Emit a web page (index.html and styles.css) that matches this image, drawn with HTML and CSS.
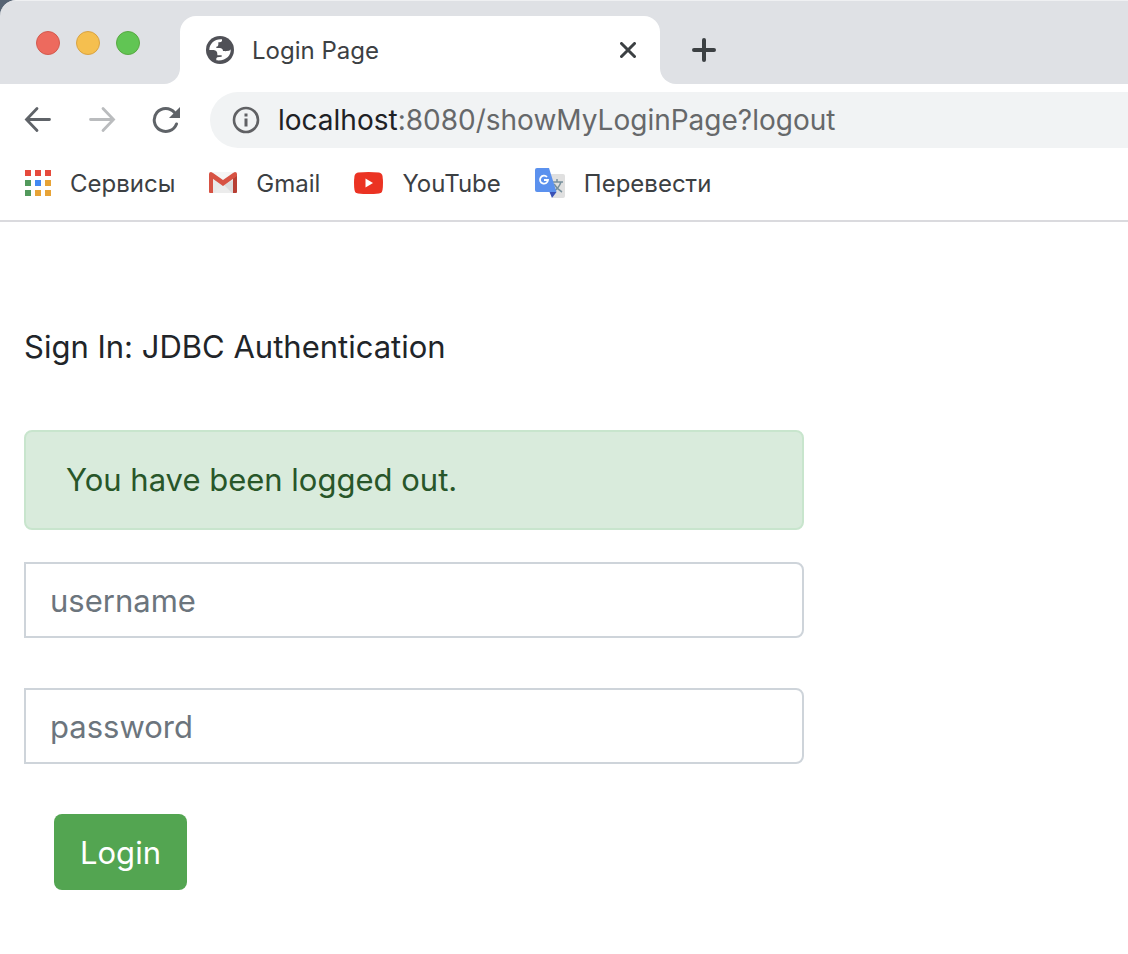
FILE: index.html
```html
<!DOCTYPE html>
<html lang="ru">
<head>
<meta charset="utf-8">
<title>Login Page</title>
<link rel="stylesheet" href="styles.css">
</head>
<body>
<header class="browser">
  <div class="tabstrip">
    <div class="strip-start">
      <button class="light light-close" aria-label="Close window"></button>
      <button class="light light-min" aria-label="Minimize window"></button>
      <button class="light light-max" aria-label="Zoom window"></button>
    </div>
    <div class="tab-slot">
      <div class="tab">
        <svg class="globe" viewBox="0 0 84 84" aria-hidden="true">
          <circle cx="42" cy="42" r="42" fill="#505157"/>
          <path fill="#fff" d="M10 42C10 24 25 10 44 10L48 10L48 15Q46 19 40 19L37 19L37 26Q37 32 31 32L31 36L41 36Q51 37 51 45L58 45Q58 51 52 54L49 58L34 58L34 54Q34 44 23 42Z"/>
          <path fill="#fff" d="M74 39C76 58 60 76 31 73L31 67Q32 63 40 63L47 62L47 54L55 47Q60 44 62 45L69 44Q74 43 74 39Z"/>
        </svg>
        <span class="tab-title">Login Page</span>
        <button class="icon-button" aria-label="Close tab">
          <svg width="16" height="16" viewBox="0 0 16 16"><path d="M1.500 1.500L14.500 14.500M14.500 1.500L1.500 14.500" stroke="#3c4043" stroke-width="3" stroke-linecap="round"/></svg>
        </button>
      </div>
    </div>
    <div class="strip-end">
      <button class="icon-button" aria-label="New tab">
        <svg width="24" height="24" viewBox="0 0 24 24"><path d="M12 2V22M2 12H22" stroke="#3c4043" stroke-width="4" stroke-linecap="round"/></svg>
      </button>
    </div>
  </div>
  <div class="toolbar">
    <nav class="nav-buttons" aria-label="Navigation">
      <button class="icon-button" aria-label="Back">
        <svg width="28" height="28" viewBox="0 0 28 28" fill="none"><path d="M25.500 13.500H3M13 2.500L2.500 13.500L13 24.500" stroke="#5f6368" stroke-width="2.800" stroke-linecap="round"/></svg>
      </button>
      <button class="icon-button" aria-label="Forward" disabled>
        <svg width="28" height="28" viewBox="0 0 28 28" fill="none"><path d="M2.500 13.500H25M15 2.500L25.500 13.500L15 24.500" stroke="#babcbe" stroke-width="2.800" stroke-linecap="round"/></svg>
      </button>
      <button class="icon-button" aria-label="Reload">
        <svg width="28" height="28" viewBox="0 0 28 28" fill="none"><path d="M22.500 6.500A11.500 11.500 0 1 0 24.500 18" stroke="#5f6368" stroke-width="3" stroke-linecap="round"/><path d="M28 1V12H17Z" fill="#5f6368"/></svg>
      </button>
    </nav>
    <div class="omnibox">
      <svg width="28" height="28" viewBox="0 0 28 28" aria-hidden="true"><circle cx="14" cy="14" r="12" fill="none" stroke="#606164" stroke-width="2.600"/><path d="M12.500 7.500h3v3h-3zM12.500 12.500h3v8h-3z" fill="#606164"/></svg>
      <span class="url"><span class="url-host">localhost</span>:8080/showMyLoginPage?logout</span>
    </div>
  </div>
  <nav class="bookmarks" aria-label="Bookmarks">
    <a class="bookmark" href="#">
      <svg width="26" height="26" viewBox="0 0 26 26" aria-hidden="true">
        <path fill="#e64a3c" d="M0 0h6v6H0zM10 0h6v6h-6zM20 0h6v6h-6z"/>
        <path fill="#52995c" d="M0 10h6v6H0zM0 20h6v6H0z"/>
        <path fill="#4289f3" d="M10 10h6v6h-6z"/>
        <path fill="#e7a336" d="M20 10h6v6h-6zM10 20h6v6h-6zM20 20h6v6h-6z"/>
      </svg>Сервисы</a>
    <a class="bookmark" href="#">
      <svg width="28" height="22" viewBox="0 0 28 22" aria-hidden="true">
        <path fill="#e9e9e9" d="M2 0H26L25 21H3Z"/>
        <path fill="#f5f5f5" d="M2 0H26L14 10Z"/>
        <path fill="#dcdcdc" d="M14 13L4 21H25V8Z"/>
        <path fill="#ececec" d="M14 12L23 21H4Z"/>
        <path fill="#d75243" d="M0 3L4 6V21H1Q0 21 0 20Z"/>
        <path fill="#b83f34" d="M24 6L28 3V20Q28 21 27 21H24Z"/>
        <path fill="#d75243" d="M0 2Q0 0 2 0L4 1L14 8L24 1L26 0Q28 0 28 2V4L14 14L0 4Z"/>
      </svg>Gmail</a>
    <a class="bookmark" href="#">
      <svg width="29" height="22" viewBox="0 0 29 22" aria-hidden="true"><path fill="#eb3323" d="M4 .5Q14.500 -.5 25 .5Q28 1 28.500 4Q29.500 11 28.500 18Q28 21 25 21.500Q14.500 22.500 4 21.500Q1 21 .5 18Q-.5 11 .5 4Q1 1 4 .5Z"/><path fill="#fff" d="M11.500 6.500L19 11L11.500 15.500Z"/></svg>YouTube</a>
    <a class="bookmark" href="#">
      <svg width="30" height="30" viewBox="0 0 30 30" aria-hidden="true">
        <path fill="#e0e0e0" d="M13 6H28Q30 6 30 8V28Q30 30 28 30H18Z"/>
        <path d="M17 14H28M22 11V14M26 14Q24 20 18 24M19 16Q22 21 27 24" fill="none" stroke="#78909c" stroke-width="1.500"/>
        <path fill="#3a51b5" d="M14.500 24H21.500L17 30Z"/>
        <path fill="#5b91ee" d="M2 0H14L21.500 24H2Q0 24 0 22V2Q0 0 2 0Z"/>
        <path d="M12 9A4 4 0 1 0 13 12H9" fill="none" stroke="#fff" stroke-width="1.800"/>
      </svg>Перевести</a>
  </nav>
</header>
<main class="page">
  <h1 class="heading">Sign In: JDBC Authentication</h1>
  <form class="login-form">
    <div class="alert" role="status">You have been logged out.</div>
    <input class="field" type="text" name="username" placeholder="username" aria-label="username">
    <input class="field" type="password" name="password" placeholder="password" aria-label="password">
    <button class="submit" type="button">Login</button>
  </form>
</main>
</body>
</html>
```
FILE: styles.css
```css
* {
  box-sizing: border-box;
}

body {
  margin: 0;
  background: #fff;
  font-family: Inter, "Liberation Sans", sans-serif;
  color: #212529;
  overflow-x: hidden;
}

button {
  padding: 0;
  border: 0;
  background: none;
  font-family: inherit;
}

svg {
  display: block;
  flex: none;
}

.browser {
  border-bottom: 2px solid #dadade;
}

.tabstrip {
  display: flex;
  height: 84px;
  background: linear-gradient(#566373 0 16px, #fff 16px);
}

.strip-start,
.strip-end {
  display: flex;
  align-items: center;
  background: #dfe1e5;
  border-top: 1px solid #eff0f2;
}

.strip-start {
  width: 180px;
  gap: 16px;
  padding-left: 36px;
  border-radius: 16px 0 16px 0;
}

.strip-end {
  flex: 1;
  padding: 14px 0 0 32px;
  border-bottom-left-radius: 16px;
}

.light {
  width: 24px;
  height: 24px;
  border: 1px solid #d35a4e;
  border-radius: 50%;
  background: #ed6a5e;
}

.light-min {
  border-color: #d9a343;
  background: #f5bf4f;
}

.light-max {
  border-color: #58a942;
  background: #61c554;
}

.tab-slot {
  width: 480px;
  padding-top: 15px;
  background: #dfe1e5;
  border-top: 1px solid #eff0f2;
}

.tab {
  display: flex;
  align-items: center;
  height: 68px;
  padding: 0 24px 0 26px;
  border-radius: 16px 16px 0 0;
  background: #fff;
}

.globe {
  width: 28px;
  height: 28px;
}

.tab-title {
  flex: 1;
  margin-left: 18px;
  font-size: 24px;
  color: #3c4043;
}

.icon-button {
  display: block;
}

.toolbar {
  display: flex;
  align-items: center;
  gap: 30px;
  padding: 8px 0 8px 24px;
}

.nav-buttons {
  display: flex;
  gap: 36px;
}

.omnibox {
  display: flex;
  flex: 1;
  align-items: center;
  gap: 18px;
  height: 56px;
  padding-left: 22px;
  border-radius: 28px 0 0 28px;
  background: #f1f3f4;
}

.url {
  font-size: 28px;
  color: #66686a;
}

.url-host {
  color: #202124;
}

.bookmarks {
  display: flex;
  gap: 34px;
  height: 64px;
  padding: 0 25px 10px;
}

.bookmark {
  display: flex;
  align-items: center;
  gap: 19px;
  font-size: 24px;
  color: #3c4043;
  text-decoration: none;
}

.page {
  padding: 100px 24px 64px;
}

.heading {
  margin: 0 0 58px;
  font-size: 31px;
  font-weight: 400;
  line-height: 50px;
}

.login-form {
  display: flex;
  flex-direction: column;
  align-items: flex-start;
  max-width: 780px;
}

.alert {
  width: 100%;
  margin-bottom: 32px;
  padding: 24px 40px;
  border: 2px solid #c8e5cd;
  border-radius: 8px;
  background: #d9ebdc;
  font-size: 31px;
  line-height: 48px;
  color: #285629;
}

.field {
  width: 100%;
  height: 76px;
  margin-bottom: 50px;
  padding: 12px 24px;
  border: 2px solid #ced4da;
  border-radius: 0 8px 8px 0;
  background: #fff;
  font-family: inherit;
  font-size: 31px;
  color: #495057;
}

.field::placeholder {
  color: #6c757d;
  opacity: 1;
}

.submit {
  height: 76px;
  margin-left: 30px;
  padding: 0 26px;
  border-radius: 8px;
  background: #53a551;
  font-size: 31px;
  color: #fff;
}
```
